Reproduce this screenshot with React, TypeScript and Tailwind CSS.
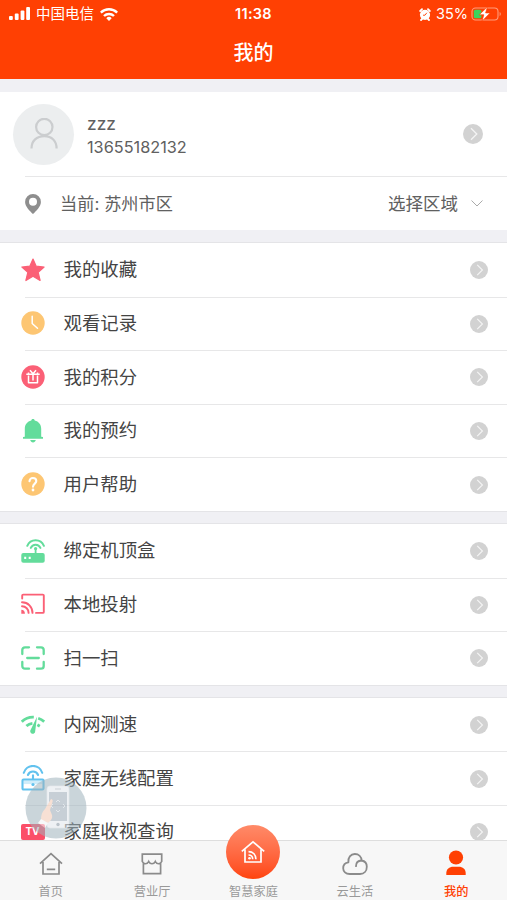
import React from 'react';

interface IconProps {
  className?: string;
}

interface MenuItem {
  label: string;
  icon: React.ReactNode;
}

const PINK = '#fb6076';
const GREEN = '#63dc9b';
const AMBER = '#fdc673';
const BLUE = '#62c2ee';

const SignalIcon = () => (
  <svg width="22" height="14" viewBox="0 0 22 14" fill="#fff">
    <rect x="0" y="9" width="3.8" height="4" rx="1" />
    <rect x="5.8" y="6.5" width="3.8" height="6.5" rx="1" />
    <rect x="11.6" y="3.5" width="3.8" height="9.5" rx="1" />
    <rect x="17.2" y="0" width="3.8" height="13" rx="1" />
  </svg>
);

const WifiIcon = () => (
  <svg width="18" height="13" viewBox="0 0 18 13" fill="none" stroke="#fff" strokeWidth="2.4">
    <path d="M.8 4.600a11.600 11.600 0 0 1 16.400 0" />
    <path d="M4 8a7.100 7.100 0 0 1 10 0" />
    <path d="M9 13 6.300 10.200a3.800 3.800 0 0 1 5.400 0z" fill="#fff" stroke="none" />
  </svg>
);

const AlarmIcon = () => (
  <svg width="12" height="13" viewBox="0 0 12 13">
    <circle cx="6" cy="6.8" r="5.1" fill="#fff" />
    <path d="M1.200 3 3 1.200M10.800 3 9 1.200M2 12l1.500-1.500M10 12l-1.500-1.500" stroke="#fff" strokeWidth="1.800" strokeLinecap="round" />
    <path d="M7.800 4.800 6 7.200H4" fill="none" stroke="#ff4003" strokeWidth=".9" />
  </svg>
);

const BatteryIcon = () => (
  <svg width="31" height="16" viewBox="0 0 31 16">
    <rect x="1" y="2" width="26" height="12" rx="3.5" fill="none" stroke="#ff9c7c" strokeWidth="1.1" />
    <path d="M28.600 6v4c1.600-.6 1.600-3.400 0-4z" fill="#ff9c7c" />
    <rect x="2.8" y="3.8" width="7.6" height="8.4" rx="1.5" fill="#3bd45c" />
    <path d="M16.500.8 8.200 8.800h4.600L11 15.200l8.200-8.300h-4.600z" fill="#fff" stroke="#ff4003" strokeWidth=".7" />
  </svg>
);

const StarIcon = () => (
  <svg width="24" height="24" viewBox="0 0 24 24" fill={PINK} stroke={PINK} strokeWidth="1.2" strokeLinejoin="round">
    <path d="m12 1 3.200 7.200 7.900.8-5.900 5.300 1.900 8.200-7.100-4.200-7.100 4.200 1.900-8.200L.9 9l7.900-.8z" />
  </svg>
);

const ClockIcon = () => (
  <svg width="24" height="24" viewBox="0 0 24 24">
    <circle cx="12" cy="12" r="11.7" fill={AMBER} />
    <path d="M11.200 5.300v7.200l5.300 4.800" fill="none" stroke="#fff" strokeWidth="1.5" strokeLinecap="round" strokeLinejoin="round" />
  </svg>
);

const GiftIcon = () => (
  <svg width="24" height="24" viewBox="0 0 24 24">
    <circle cx="12" cy="12" r="11.7" fill={PINK} />
    <g fill="none" stroke="#fff" strokeWidth="1.500" strokeLinejoin="round">
      <path d="M7.500 10.500v7.300h9v-7.300M5.300 9.200h13.400M12 9.200v6.300M9 5.300l3 3.500 3-3.500M7.500 7.500v1.500M16.500 7.500v1.500" />
    </g>
  </svg>
);

const BellIcon = () => (
  <svg width="24" height="24" viewBox="0 0 24 24" fill={GREEN}>
    <path d="M12 0c1.100 0 1.700.7 1.700 1.500 4 1 6.500 4 6.500 8.300v8l1.800.3v1.600H2v-1.600l1.800-.3v-8c0-4.300 2.500-7.300 6.500-8.300C10.300.7 10.900 0 12 0z" />
    <path d="M9.200 21h5.600c-.4 1.500-1.400 2.500-2.800 2.500S9.600 22.500 9.200 21z" />
  </svg>
);

const HelpIcon = () => (
  <svg width="24" height="24" viewBox="0 0 24 24">
    <circle cx="12" cy="12" r="11.7" fill={AMBER} />
    <path d="M8.500 9.300c0-2 1.400-3.300 3.400-3.300s3.400 1.300 3.400 3.100c0 2.500-3.300 2.600-3.300 5.600" fill="none" stroke="#fff" strokeWidth="2.100" strokeLinecap="round" />
    <circle cx="12" cy="18" r="1.400" fill="#fff" />
  </svg>
);

const RouterIcon = () => (
  <svg width="24" height="24" viewBox="0 0 24 24" fill="none" stroke={GREEN}>
    <path d="M6.300 6.800a9 9 0 0 1 16.600 0M9.800 8.900a5.200 5.200 0 0 1 9.600 0" strokeWidth="2" strokeLinecap="round" />
    <path d="M14.600 9v6" strokeWidth="1.800" />
    <circle cx="14.600" cy="9.600" r="1.600" fill={GREEN} stroke="none" />
    <rect x=".3" y="14" width="23.400" height="9.700" rx="2" fill={GREEN} stroke="none" />
    <path d="M3.200 18.800h2M7.700 18.800h2" stroke="#fff" strokeWidth="2.200" />
  </svg>
);

const CastIcon = () => (
  <svg width="24" height="24" viewBox="0 0 24 24" fill="none" stroke={PINK} strokeWidth="1.900" strokeLinecap="round">
    <path d="M1.200 6.500V3.600c0-.6.400-1 1-1h19.600c.6 0 1 .4 1 1v16.300c0 .6-.4 1-1 1H15" />
    <path d="M1 10.300c6 0 10.500 4.600 10.500 10.600M1 14.300c3.800 0 6.600 2.900 6.600 6.600" />
    <path d="M.3 17.700c2.200 0 3.600 1.600 3.600 4H.3z" fill={PINK} stroke="none" />
  </svg>
);

const ScanIcon = () => (
  <svg width="24" height="24" viewBox="0 0 24 24" fill="none" stroke={GREEN} strokeWidth="2.300" strokeLinecap="round">
    <path d="M1.300 8V4c0-1.700 1-2.700 2.700-2.700h4M16 1.300h4c1.700 0 2.700 1 2.700 2.700v4M22.700 16v4c0 1.700-1 2.700-2.700 2.700h-4M8 22.700H4c-1.700 0-2.700-1-2.700-2.700v-4M6.200 12h11.600" />
  </svg>
);

const SpeedIcon = () => (
  <svg width="24" height="24" viewBox="0 0 24 24" fill="none" stroke={GREEN} strokeWidth="2.800">
    <path d="M.8 8.700C4.100 5.500 8.200 4 12.800 4.200M17.200 5.200c2.300.8 4.200 1.900 6 3.500" />
    <path d="M5.400 13.100c1.700-1.600 3.700-2.600 6-2.800M16.400 11.700l2.400 1.500" />
    <path d="m16 3.700-1.800 14.500a2.500 2.500 0 1 1-4.500-1.400z" fill={GREEN} stroke="none" />
  </svg>
);

const HomeWifiIcon = () => (
  <svg width="24" height="26" viewBox="0 0 24 26" fill="none" stroke={BLUE} strokeWidth="2.100">
    <path d="M2.800 7.800a9.600 9.600 0 0 1 18.400 0M6.900 10a5.500 5.500 0 0 1 10.200 0" strokeLinecap="round" />
    <path d="M12 9.500v4.500" />
    <rect x="1.500" y="14.500" width="21" height="10" rx="1" fill="#fff" />
    <path d="M2.500 17.300h19" strokeWidth="3.500" strokeOpacity=".3" />
    <circle cx="12" cy="19.500" r="1.600" fill={BLUE} stroke="none" />
  </svg>
);

const TvIcon = () => (
  <div className="relative flex h-4 w-6 items-center justify-center rounded-xs bg-[#fb4f68] text-[10px] font-bold text-white">
    TV
    <span className="absolute top-4 h-[2px] w-2 bg-[#fb4f68]" />
  </div>
);

const PinIcon = () => (
  <svg width="16" height="20" viewBox="0 0 16 20" fill="#8e8e8e">
    <path fillRule="evenodd" d="M8 0a7.900 7.900 0 0 1 7.900 7.900C15.900 12.500 11 17 8 20 5 17 .1 12.500.1 7.900A7.900 7.900 0 0 1 8 0zm0 3.800a4 4 0 1 0 0 8 4 4 0 0 0 0-8z" />
  </svg>
);

const AvatarIcon = () => (
  <svg width="28" height="32" viewBox="0 0 28 32" fill="none" stroke="#cbcdcf" strokeWidth="2.200">
    <circle cx="14.300" cy="9" r="8.200" />
    <path d="M1.500 30.500c0-7.700 5.300-12.400 12.800-12.400s12.300 4.700 12.300 12.400" />
  </svg>
);

const CircleArrow: React.FC<IconProps> = ({ className }) => (
  <svg className={className} viewBox="0 0 20 20">
    <circle cx="10" cy="10" r="10" fill="#d2d2d2" />
    <path d="m8 4.300 5.800 5.700L8 15.700" fill="none" stroke="#f4f4f4" strokeWidth="1.300" />
  </svg>
);

const HomeIcon = () => (
  <svg width="24" height="24" viewBox="0 0 24 24" fill="none" stroke="#8b8b8b" strokeWidth="1.700">
    <path d="M1 11.700 12 1.600l11 10.100M4 10v12h16V10M7.800 17.300h8.400" />
  </svg>
);

const ShopIcon = () => (
  <svg width="24" height="24" viewBox="0 0 24 24" fill="none" stroke="#8b8b8b" strokeWidth="1.700">
    <path d="M2.300 2.200h19.400v7.300c-1.300 3-5 3-6.400 0-1.300 3-5.300 3-6.600 0-1.400 3-5.100 3-6.400 0zM3.400 11v10.700h17.200V11" />
  </svg>
);

const CloudIcon = () => (
  <svg width="26" height="24" viewBox="0 0 26 24" fill="none" stroke="#8b8b8b" strokeWidth="1.800" strokeLinecap="round">
    <path d="M6.400 10.300C5.800 5.500 8.700 2 12.800 2c4 0 6.700 2.700 6.800 6.500 3.300.6 5.200 3.100 5.200 6.200 0 4.300-2.600 7.300-6.800 7.300H7.700c-4 0-6.500-2.400-6.500-5.800 0-3.100 2-5.500 5.200-5.900M14 14.200c0-3.300 2.300-5.500 5.600-5.700" />
  </svg>
);

const UserIcon = () => (
  <svg width="20" height="26" viewBox="0 0 20 26" fill="#ff4003">
    <circle cx="10" cy="7.500" r="7.100" />
    <path d="M.3 25v-2c0-4 3-6.300 7-6.300h5.400c4 0 7 2.300 7 6.300v2z" />
  </svg>
);

const SmartHomeIcon = () => (
  <svg width="24" height="24" viewBox="0 0 24 24" fill="none" stroke="#fff" strokeWidth="1.700">
    <path d="M.8 11.300 12 1.800l11.200 9.500M4 9.500V22h16V9.500" />
    <path d="M7.500 11.700c4.500 0 7.400 3 7.400 7.500M7.500 15c2.600 0 4.200 1.700 4.200 4.200" />
    <circle cx="8.500" cy="18.200" r="1.300" fill="#fff" stroke="none" />
  </svg>
);

// Floating remote-control button: a hand touching a phone
const RemoteButton = () => (
  <svg className="absolute top-[777px] left-[25px] z-10 opacity-60" width="62" height="62" viewBox="0 0 62 62">
    <defs>
      <clipPath id="remote">
        <circle cx="31" cy="31" r="30.500" />
      </clipPath>
    </defs>
    <g clipPath="url(#remote)">
      <rect width="62" height="62" fill="#9fb3bd" fillOpacity=".9" />
      <rect x="22" y="9" width="22" height="42" rx="3" fill="#e4e9ed" stroke="#d2d9de" strokeWidth=".7" />
      <rect x="24" y="15" width="18" height="29" fill="#a3b0bc" />
      <path d="M30 12h6" stroke="#a9b3bc" strokeWidth="1" />
      <circle cx="33" cy="47.500" r="1.700" fill="#8f9ca8" />
      <path d="m31 25 2-2 2 2M31 33l2 2 2-2M28 27l-2 2 2 2M38 27l2 2-2 2" fill="none" stroke="#d3dae0" strokeWidth="1" />
      <path d="M26 22c1.500 0 2 1.500 1.500 3L25 33l2 5c1 4-2 6-4 8l-7-3c0-5 1-8 4-11z" fill="#f2cdb9" />
      <path d="m16 42 7 4-3 5-7-5z" fill="#f3f4f5" />
    </g>
  </svg>
);

const groups: MenuItem[][] = [
  [
    { label: '我的收藏', icon: <StarIcon /> },
    { label: '观看记录', icon: <ClockIcon /> },
    { label: '我的积分', icon: <GiftIcon /> },
    { label: '我的预约', icon: <BellIcon /> },
    { label: '用户帮助', icon: <HelpIcon /> },
  ],
  [
    { label: '绑定机顶盒', icon: <RouterIcon /> },
    { label: '本地投射', icon: <CastIcon /> },
    { label: '扫一扫', icon: <ScanIcon /> },
  ],
  [
    { label: '内网测速', icon: <SpeedIcon /> },
    { label: '家庭无线配置', icon: <HomeWifiIcon /> },
    { label: '家庭收视查询', icon: <TvIcon /> },
  ],
];

const tabs: MenuItem[] = [
  { label: '首页', icon: <HomeIcon /> },
  { label: '营业厅', icon: <ShopIcon /> },
  { label: '智慧家庭', icon: <SmartHomeIcon /> },
  { label: '云生活', icon: <CloudIcon /> },
  { label: '我的', icon: <UserIcon /> },
];

const Header = () => (
  <header className="h-[79px] shrink-0 bg-[#ff4003] text-white">
    <div className="grid h-7 grid-cols-3 items-center pr-[5px] pl-[9px] text-[14.5px]">
      <div className="flex items-center">
        <SignalIcon />
        <span className="mr-1.5 ml-[5px]">中国电信</span>
        <WifiIcon />
      </div>
      <span className="pr-1 text-center text-[14.5px] font-semibold tracking-[0.3px]">11:38</span>
      <div className="flex items-center justify-end">
        <AlarmIcon />
        <span className="mr-[3px] ml-[5px] text-[14.5px]">35%</span>
        <BatteryIcon />
      </div>
    </div>
    <h1 className="pt-[9px] text-center text-[20px] leading-8 font-medium">我的</h1>
  </header>
);

const Profile = () => (
  <section className="mt-[13px] mb-3 shrink-0 bg-white text-[#606060]">
    <div className="flex h-[84px] items-center pr-[24px] pl-[13px]">
      <div className="flex size-[61px] items-center justify-center rounded-full bg-[#eceeef]">
        <AvatarIcon />
      </div>
      <div className="ml-[13px] flex-1 pt-[3px] text-[16.300px] leading-[23px]">
        <p className="text-[17.500px]">zzz</p>
        <p className="mt-px">13655182132</p>
      </div>
      <CircleArrow className="size-5" />
    </div>
    <div className="ml-[25px] flex h-[54px] items-center border-t border-[#e7e7e8] pr-6 text-[17.500px]">
      <PinIcon />
      <span className="ml-[19px] flex-1 pt-px text-[17.200px]">当前: 苏州市区</span>
      <span className="pt-px">选择区域</span>
      <svg className="ml-[13px]" width="12" height="7" viewBox="0 0 12 7" fill="none" stroke="#aaa">
        <path d="m.5.500 5.500 5.500L11.500.5" />
      </svg>
    </div>
  </section>
);

const MenuGroup: React.FC<{ items: MenuItem[] }> = ({ items }) => (
  <section className="mb-[11px] shrink-0 border-y border-[#e4e4e7] bg-white">
    {items.map((item, index) => (
      <div key={item.label} className="flex h-[53.600px] items-center">
        <div className="flex w-[65px] shrink-0 justify-center">{item.icon}</div>
        <div
          className={`-ml-10 flex h-full flex-1 items-center pr-[19px] pl-[38.500px] ${
            index > 0 ? 'border-t border-[#e7e7e8]' : ''
          }`}
        >
          <span className="flex-1 text-[18.400px] text-[#444]">{item.label}</span>
          <CircleArrow className="size-[18px]" />
        </div>
      </div>
    ))}
  </section>
);

const TabBar = () => (
  <nav className="absolute inset-x-0 bottom-0 z-20 grid h-[60px] grid-cols-5 grid-rows-1 border-t border-[#dedede] bg-[#f7f7f7]">
    {tabs.map((tab, index) => (
      <div
        key={tab.label}
        className={`flex min-h-0 flex-col items-center justify-end text-[12.200px] leading-[17px] ${
          index === 4 ? 'font-medium text-[#ff4003]' : 'text-[#999]'
        }`}
      >
        {index === 2 ? (
          <div className="mb-1 flex size-[54px] shrink-0 items-center justify-center rounded-full bg-linear-to-b from-[#ff8a68] to-[#ff4308]">
            {tab.icon}
          </div>
        ) : (
          <div className="mb-[7px] shrink-0">{tab.icon}</div>
        )}
        <span>{tab.label}</span>
      </div>
    ))}
  </nav>
);

const App: React.FC = () => {
  return (
    <div className="relative flex h-[900px] w-full flex-col overflow-hidden bg-[#f0f0f4] font-['Inter','Noto_Sans_CJK_SC',sans-serif]">
      <Header />
      <Profile />
      {groups.map((items) => (
        <MenuGroup key={items[0].label} items={items} />
      ))}
      <RemoteButton />
      <TabBar />
    </div>
  );
};

export default App;
